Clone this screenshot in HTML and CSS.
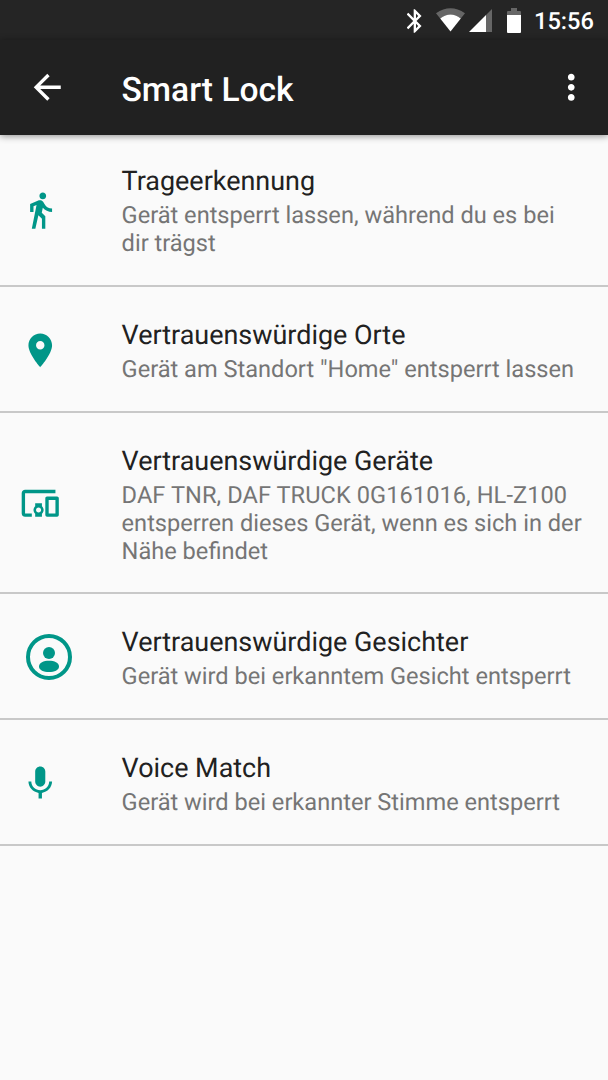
FILE: index.html
```html
<!DOCTYPE html>
<html lang="de">
<head>
<meta charset="utf-8">
<title>Smart Lock</title>
<link rel="stylesheet" href="styles.css">
</head>
<body>
<div class="status-bar">
  <svg class="bluetooth" viewBox="5.3 2 12.8 20"><path d="M17.71 7.71L12 2h-1v7.59L6.41 5 5 6.41 10.59 12 5 17.59 6.41 19 11 14.41V22h1l5.71-5.71-4.3-4.29 4.3-4.29zM13 5.83l1.88 1.88L13 9.59V5.83zm1.88 10.46L13 18.17v-3.76l1.88 1.88z"/></svg>
  <svg class="wifi" viewBox="0 0 29 24"><path class="dim" d="M0 5.2Q14.5-4.8 29 5.2L24.8 10.5Q14.5 2.5 4.2 10.5z"/><path d="M4.2 10.5Q14.5 2.5 24.8 10.5L14.5 23.5z"/></svg>
  <svg class="signal" viewBox="0 0 23 23"><path class="dim" d="M17 6L23 0v23h-6z"/><path d="M0 23L17 6v17z"/></svg>
  <svg class="battery" viewBox="0 0 14 25"><path class="dim" d="M4 0h6v3h3q1 0 1 1v3H0V4q0-1 1-1h3z"/><path d="M0 7h14v17q0 1-1 1H1q-1 0-1-1z"/></svg>
  <span class="clock">15:56</span>
</div>
<header class="app-bar">
  <svg class="back" viewBox="0 0 24 24"><path d="M20 11H7.83l5.59-5.59L12 4l-8 8 8 8 1.41-1.41L7.83 13H20v-2z"/></svg>
  <h1 class="title">Smart Lock</h1>
  <svg class="more" viewBox="0 0 24 24"><path d="M12 8c1.1 0 2-.9 2-2s-.9-2-2-2-2 .9-2 2 .9 2 2 2zm0 2c-1.1 0-2 .9-2 2s.9 2 2 2 2-.9 2-2-.9-2-2-2zm0 6c-1.1 0-2 .9-2 2s.9 2 2 2 2-.9 2-2-.9-2-2-2z"/></svg>
</header>
<main class="list">
  <section class="row">
    <div class="icon-cell"><svg class="icon" viewBox="0 0 24 24"><path d="M13.5 5.5c1.1 0 2-.9 2-2s-.9-2-2-2-2 .9-2 2 .9 2 2 2zM9.8 8.9L7 23h2.1l1.8-8 2.1 2v6h2v-7.5l-2.1-2 .6-3C14.8 12 16.8 13 19 13v-2c-1.9 0-3.5-1-4.3-2.4l-1-1.6c-.4-.6-1-1-1.7-1-.3 0-.5.1-.8.1L6 8.3V13h2V9.6l1.8-.7"/></svg></div>
    <div class="text"><h2 class="name">Trageerkennung</h2><p class="summary">Gerät entsperrt lassen, während du es bei<br>dir trägst</p></div>
  </section>
  <section class="row">
    <div class="icon-cell"><svg class="icon" viewBox="0 0 24 24"><path d="M12 2C8.13 2 5 5.13 5 9c0 5.25 7 13 7 13s7-7.75 7-13c0-3.87-3.13-7-7-7zm0 9.5c-1.38 0-2.5-1.12-2.5-2.5s1.12-2.5 2.5-2.5 2.5 1.12 2.5 2.5-1.12 2.5-2.5 2.5z"/></svg></div>
    <div class="text"><h2 class="name">Vertrauenswürdige Orte</h2><p class="summary">Gerät am Standort "Home" entsperrt lassen</p></div>
  </section>
  <section class="row">
    <div class="icon-cell"><svg class="icon" viewBox="0 0 24 24"><path d="M3 6h18V4H3c-1.1 0-2 .9-2 2v12c0 1.1.9 2 2 2h4v-2H3V6zm10 6H9v1.78c-.61.55-1 1.33-1 2.22s.39 1.67 1 2.22V20h4v-1.78c.61-.55 1-1.34 1-2.22s-.39-1.67-1-2.22V12zm-2 5.5c-.83 0-1.5-.67-1.5-1.5s.67-1.5 1.5-1.5 1.5.67 1.5 1.5-.67 1.5-1.5 1.5zM22 8h-6c-.5 0-1 .5-1 1v10c0 .5.5 1 1 1h6c.5 0 1-.5 1-1V9c0-.5-.5-1-1-1zm-1 10h-4v-8h4v8z"/></svg></div>
    <div class="text"><h2 class="name">Vertrauenswürdige Geräte</h2><p class="summary"><span class="devices">DAF TNR, DAF TRUCK 0G161016, HL-Z100</span><br>entsperren dieses Gerät, wenn es sich in der<br>Nähe befindet</p></div>
  </section>
  <section class="row">
    <div class="icon-cell"><svg class="face" viewBox="0 0 46 46"><circle class="ring" cx="23" cy="23" r="21"/><circle cx="23" cy="19" r="6"/><path d="M13 32.5c0-3.8 4.6-5.8 10-5.8s10 2 10 5.8c0 3.7-4.6 5.5-10 5.5s-10-1.8-10-5.5z"/></svg></div>
    <div class="text"><h2 class="name">Vertrauenswürdige Gesichter</h2><p class="summary">Gerät wird bei erkanntem Gesicht entsperrt</p></div>
  </section>
  <section class="row">
    <div class="icon-cell"><svg class="icon" viewBox="0 0 24 24"><path d="M12 14c1.66 0 2.99-1.34 2.99-3L15 5c0-1.66-1.34-3-3-3S9 3.34 9 5v6c0 1.66 1.34 3 3 3zm5.3-3c0 3-2.54 5.1-5.3 5.1S6.7 14 6.7 11H5c0 3.41 2.72 6.23 6 6.72V21h2v-3.28c3.28-.48 6-3.3 6-6.72h-1.7z"/></svg></div>
    <div class="text"><h2 class="name">Voice Match</h2><p class="summary">Gerät wird bei erkannter Stimme entsperrt</p></div>
  </section>
</main>
</body>
</html>
```
FILE: styles.css
```css
* { box-sizing: border-box; }
body {
  margin: 0;
  min-height: 1080px;
  background: #fafafa;
  font-family: Roboto, "Noto Sans", sans-serif;
  text-rendering: geometricPrecision;
}
svg { display: block; flex: none; fill: currentColor; }
h1, h2, p { margin: 0; white-space: nowrap; }

.status-bar {
  display: flex;
  align-items: flex-start;
  height: 40px;
  padding: 8px 14px 0 0;
  justify-content: flex-end;
  background: #252525;
  color: #fff;
}
.dim { opacity: .3; }
.bluetooth { width: 15px; height: 24px; margin: 1px 14px 0 0; }
.wifi { width: 29px; height: 24px; margin-right: 4px; }
.signal { width: 23px; height: 23px; margin: 1px 15px 0 0; }
.battery { width: 14px; height: 25px; margin-right: 13px; }
.clock {
  width: 60px;
  font-size: 23.64px;
  font-weight: 500;
  line-height: 28px;
  margin-top: -1px;
}

.app-bar {
  position: relative;
  display: flex;
  align-items: center;
  height: 95px;
  padding: 0 17px 0 27px;
  background: #212121;
  color: #fff;
  box-shadow: 0 1px 7px rgba(0, 0, 0, .45);
}
.back { width: 40.5px; height: 40.5px; }
.title {
  flex: 1;
  padding: 6px 0 0 54px;
  font-size: 33.6px;
  font-weight: 500;
  line-height: 40px;
}
.more { width: 40.5px; height: 40.5px; }

.row {
  display: flex;
  height: 126px;
  border-bottom: 2px solid #c8c8c8;
}
.row:nth-child(1) { height: 152px; }
.row:nth-child(3) { height: 181px; }
.icon-cell {
  display: flex;
  align-items: center;
  width: 121.6px;
  padding: 2px 0 0 20px;
  color: #009688;
}
.row:nth-child(1) .icon-cell { padding-top: 0; }
.icon { width: 40.5px; height: 40.5px; }
.face { width: 46px; height: 46px; margin-left: 6px; }
.ring { fill: none; stroke: currentColor; stroke-width: 4; }
.text { padding-top: 30px; }
.row:nth-child(1) .text { padding-top: 29px; }
.name {
  font-size: 26.95px;
  font-weight: 400;
  line-height: 36px;
  color: #212121;
}
.row:nth-child(1) .name { line-height: 35px; }
.summary {
  padding-top: 3.4px;
  font-size: 23.6px;
  line-height: 27.6px;
  color: #757575;
}
.devices { letter-spacing: .06px; }
```
